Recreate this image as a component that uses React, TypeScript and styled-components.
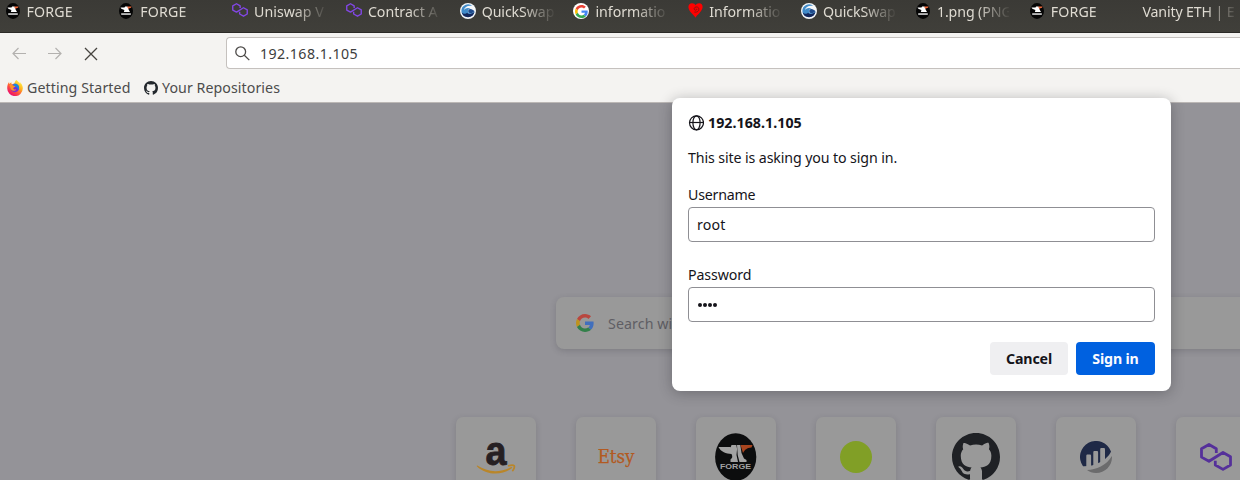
import React from 'react';
import styled, { createGlobalStyle } from 'styled-components';

const GlobalStyle = createGlobalStyle`
  * { box-sizing: border-box; }
  body { margin: 0; font-family: "Noto Sans", "Open Sans", sans-serif; overflow: hidden; }
  svg { display: block; flex: none; }
`;

const Browser = styled.div`
  position: relative;
  display: flex;
  flex-direction: column;
  width: 1240px;
  height: 480px;
  overflow: hidden;
  background: #f4f3f1;
`;

const TabBar = styled.div`
  display: flex;
  height: 33px;
  flex: none;
  padding-left: 4.5px;
  background: linear-gradient(#3b3a36, #403f3a);
  border-bottom: 1px solid #2b2a27;
  overflow: hidden;
`;

const Tab = styled.div`
  display: flex;
  gap: 6px;
  flex: none;
  width: 113.8px;
  height: 24px;
  align-items: center;
`;

const TabIcon = styled.span`
  display: flex;
  flex: none;
  width: 16px;
  height: 16px;
  margin-top: -2px;
  justify-content: center;
`;

const TabTitle = styled.span<{ $wide?: boolean; $ls?: number }>`
  width: ${(p) => (p.$wide ? 95 : 72)}px;
  overflow: hidden;
  white-space: nowrap;
  font-size: 14.2px;
  line-height: 22px;
  letter-spacing: ${(p) => p.$ls ?? 0}px;
  color: #dfdbd2;
  mask-image: linear-gradient(to right, #000 calc(100% - 32px), rgba(0, 0, 0, 0.06));
`;

const NavBar = styled.div`
  display: flex;
  flex: none;
  height: 40px;
  padding: 4px 0 4px 10px;
  align-items: center;
`;

const NavButtons = styled.div`
  display: flex;
  gap: 18px;
  width: 216px;
  padding-top: 2px;
`;

const UrlBar = styled.div`
  display: flex;
  flex: 1;
  height: 32px;
  align-items: center;
  gap: 10px;
  padding-left: 8px;
  background: #fff;
  border: 1px solid #c5c1be;
  border-right: 0;
  border-radius: 4px 0 0 4px;
`;

const Text = styled.span<{ $size?: number; $ls?: number; $color?: string; $bold?: boolean; $drop?: boolean }>`
  white-space: nowrap;
  padding-top: ${(p) => (p.$drop ? 2 : 0)}px;
  font-size: ${(p) => p.$size ?? 14.2}px;
  line-height: 20px;
  letter-spacing: ${(p) => p.$ls ?? 0}px;
  color: ${(p) => p.$color ?? '#15141a'};
  font-weight: ${(p) => (p.$bold ? 700 : 400)};
`;

const Bookmarks = styled.div`
  display: flex;
  flex: none;
  height: 30px;
  padding-left: 7px;
  gap: 13px;
  align-items: center;
  border-bottom: 1px solid #bbb7b5;
`;

const Bookmark = styled.div<{ $width?: number }>`
  display: flex;
  align-items: center;
  gap: 4px;
  width: ${(p) => (p.$width ? `${p.$width}px` : 'auto')};
`;

const NewTab = styled.main`
  flex: 1;
  display: flex;
  flex-direction: column;
  padding: 194px 0 0 456px;
  background: #949398;
  overflow: hidden;
`;

const SearchBox = styled.div`
  display: flex;
  flex: none;
  align-items: center;
  gap: 14px;
  width: 720px;
  height: 52px;
  margin-left: 100px;
  padding-left: 20px;
  background: #999;
  border-radius: 8px;
  box-shadow: 0 2px 6px rgba(40, 40, 50, 0.2);
`;

const Tiles = styled.div`
  display: flex;
  gap: 40px;
  margin-top: 68px;
`;

const Tile = styled.div`
  display: flex;
  flex: none;
  width: 80px;
  height: 80px;
  align-items: center;
  justify-content: center;
  background: #999;
  border-radius: 7px;
  box-shadow: 0 2px 6px rgba(40, 40, 50, 0.18);
`;

const Dialog = styled.form`
  position: absolute;
  left: 672px;
  top: 98px;
  width: 499px;
  height: 293px;
  padding: 15px 16px 16px;
  display: flex;
  flex-direction: column;
  background: #fff;
  border-radius: 8px;
  box-shadow: 0 2px 14px rgba(30, 30, 35, 0.33);
`;

const DialogTitle = styled.div`
  display: flex;
  align-items: center;
  gap: 4px;
  height: 20px;
  margin-bottom: 15px;
`;

const Field = styled.label<{ $top: number }>`
  display: flex;
  flex-direction: column;
  margin-top: ${(p) => p.$top}px;
`;

const Entry = styled.div`
  display: flex;
  align-items: center;
  height: 35px;
  margin-top: 2px;
  padding-left: 8px;
  border: 1px solid #8f8f94;
  border-radius: 4px;
`;

const Dots = styled.div`
  display: flex;
  gap: 1.3px;
  padding-left: 0.5px;
`;

const Dot = styled.i`
  width: 4px;
  height: 4px;
  border-radius: 50%;
  background: #15141a;
`;

const Actions = styled.div`
  display: flex;
  justify-content: flex-end;
  gap: 8px;
  margin-top: 20px;
`;

const Button = styled.button<{ $primary?: boolean }>`
  display: flex;
  align-items: center;
  justify-content: center;
  width: ${(p) => (p.$primary ? 79 : 78)}px;
  height: 33px;
  padding: 0;
  border: 0;
  border-radius: 4px;
  font-family: inherit;
  background: ${(p) => (p.$primary ? '#0061e0' : '#efeff1')};
`;

const GITHUB =
  'M8 0C3.58 0 0 3.58 0 8c0 3.54 2.29 6.53 5.47 7.59.4.07.55-.17.55-.38 0-.19-.01-.82-.01-1.49-2.01.37-2.53-.49-2.69-.94-.09-.23-.48-.94-.82-1.13-.28-.15-.68-.52-.01-.53.63-.01 1.08.58 1.23.82.72 1.21 1.87.87 2.33.66.07-.52.28-.87.51-1.07-1.78-.2-3.64-.89-3.64-3.95 0-.87.31-1.59.82-2.15-.08-.2-.36-1.02.08-2.12 0 0 .67-.21 2.2.82.64-.18 1.32-.27 2-.27.68 0 1.36.09 2 .27 1.53-1.04 2.2-.82 2.2-.82.44 1.1.16 1.92.08 2.12.51.56.82 1.27.82 2.15 0 3.07-1.87 3.75-3.65 3.95.29.25.54.73.54 1.48 0 1.07-.01 1.93-.01 2.2 0 .21.15.46.55.38A8.013 8.013 0 0016 8c0-4.42-3.58-8-8-8z';

const GitHub = ({ size, color }: { size: number; color: string }) => (
  <svg width={size} height={size} viewBox="0 0 16 16"><path fill={color} d={GITHUB} /></svg>
);

const Google = ({ size, colors }: { size: number; colors: string[] }) => (
  <svg width={size} height={size} viewBox="0 0 48 48">
    <path fill={colors[0]} d="M24 9.5c3.54 0 6.71 1.22 9.21 3.6l6.85-6.85C35.9 2.38 30.47 0 24 0 14.62 0 6.51 5.38 2.56 13.22l7.98 6.19C12.43 13.72 17.74 9.5 24 9.5z" />
    <path fill={colors[1]} d="M46.98 24.55c0-1.57-.15-3.09-.38-4.55H24v9.02h12.94c-.58 2.96-2.26 5.48-4.78 7.18l7.73 6c4.51-4.18 7.09-10.36 7.09-17.65z" />
    <path fill={colors[2]} d="M10.53 28.59c-.48-1.45-.76-2.99-.76-4.59s.27-3.14.76-4.59l-7.98-6.19C.92 16.46 0 20.12 0 24c0 3.88.92 7.54 2.56 10.78l7.97-6.19z" />
    <path fill={colors[3]} d="M24 48c6.48 0 11.93-2.13 15.89-5.81l-7.73-6c-2.15 1.45-4.92 2.3-8.16 2.3-6.26 0-11.57-4.22-13.47-9.91l-7.98 6.19C6.51 42.62 14.62 48 24 48z" />
  </svg>
);

const GoogleBadge = styled.span`
  display: flex;
  width: 16px;
  height: 16px;
  align-items: center;
  justify-content: center;
  border-radius: 50%;
  background: #fff;
`;

const Polygon = ({ width, color }: { width: number; color: string }) => (
  <svg width={width} height={(width * 28) / 32} viewBox="0 0 32 28">
    <path fill="none" stroke={color} strokeWidth="2.8" strokeLinejoin="round" d="M16.3 10V5.8L9 1.500 1.500 5.800v8.300L9 18.300 23 9.500l7.500 4.200v8.300L23 26.400 15.300 22v-4.300" />
  </svg>
);

const Forge = ({ width, height, white, accent, black }: { width: number; height: number; white: string; accent: string; black: string }) => (
  <svg width={width} height={height} viewBox="0 0 42 48" preserveAspectRatio="none">
    <ellipse cx="20.700" cy="24" rx="20.6" ry="23.7" fill={black} />
    <path fill={white} d="M3.500 14h12v.8l1-2.800h4.800l.8 4-.6 6 1.500 7h-7.500v-2.500c2-1.500 2.300-3 1-5.500C11 20.500 6 19 3.500 14z" />
    <path fill={white} d="M22 12h3.300l1.200 8 2.500 5.500 2.500 1.500v2h-7l-1.800-7z" />
    <path fill={accent} d="M25.500 12H37.500l-1 2.500c-5 .5-6.500 2-8.500 5.500z" />
    <text x="20.500" y="36.400" textAnchor="middle" textLength="31" lengthAdjust="spacingAndGlyphs" fontFamily="Liberation Sans" fontWeight="700" fontSize="8" fill={white}>FORGE</text>
  </svg>
);

const ForgeSmall = () => (
  <svg width="14" height="16" viewBox="0 0 14 16">
    <ellipse cx="7" cy="8" rx="7" ry="7.900" fill="#050505" />
    <path fill="#fff" d="M1.500 4.500h4l.6-.9h2.400l1.200 3.200 1.300 2.200H4.900l.5-2C3.600 6.600 2 5.800 1.500 4.500z" />
    <path fill="#f06a3c" d="M8.300 3.600h4.200l-.4 1.100c-1.500.1-2.100.5-2.800 1.500z" />
    <path fill="#b5b5b5" d="M2.200 10.100h9.600v1.900H2.200z" />
  </svg>
);

const QuickSwap = () => (
  <svg width="16" height="16" viewBox="0 0 16 16">
    <circle cx="8" cy="8" r="8" fill="#f4f7fa" />
    <path fill="#418bc9" d="M1.400 8.500A6.700 6.700 0 0112.500 3C8 2 4.500 4 4 7c1.500-2 4.500-2.700 6.500-1-2 0-3 1.300-2.500 2.800 1 2.200 4 1.500 6.600-.8A6.700 6.700 0 011.400 8.500z" />
    <path fill="#14275c" d="M1.500 9.300C3.500 11.500 6 11 7 9.800c2 2.200 5.500 1.200 7.500-1A6.700 6.700 0 011.500 9.300z" />
    <path fill="#1f4b8c" d="M10.500 6c1.300.2 2.700 1 3.900 2-.7 2-4.500 3.300-6 1-.8-1.500.3-3 2.100-3z" />
  </svg>
);

const Heart = () => (
  <svg width="15" height="15" viewBox="0 0 15 15">
    <path fill="#f00" d="M7.500 14.700C6.500 12.500.7 8.700.4 4.300.3 1.700 2 .3 4 .3c1.700 0 3 .8 3.600 2C8.200 1.100 9.500.3 11.200.3c2 0 3.600 1.600 3.400 4-.4 4.300-6 8-7.100 10.400z" />
    <path fill="none" stroke="#7a1813" strokeWidth=".85" d="M6.300 9.100c2.900.5 4.800-1.100 4.600-3.200-.2-1.900-2.600-2.500-4-1.500-1.300.9-.7 2.800.7 2.800 1 0 1.400-1 .7-1.500" />
  </svg>
);

const Firefox = () => (
  <svg width="16" height="16" viewBox="0 0 16 16">
    <defs>
      <linearGradient id="fx" x1=".85" y1=".1" x2=".25" y2=".9">
        <stop offset="0" stopColor="#fff044" /><stop offset=".35" stopColor="#ffb21f" /><stop offset=".65" stopColor="#ff563b" /><stop offset="1" stopColor="#ed1269" />
      </linearGradient>
    </defs>
    <path fill="url(#fx)" d="M15 5c-.5-1.300-1.600-2.600-2.400-3 .5 1 .7 1.700.8 2.200C12.200 1.800 10.200 1.200 9.500 0 8.500.6 7.600 2 7.500 3.500c-1 .1-1.800.5-2.500 1-.7-.4-.6-1.800-.5-2.200C3.600 2.700 2.900 3.500 2.400 4.100c-.3-.5-.3-1.600-.2-2C1 3.300.2 5.600.2 8.200a7.800 7.800 0 0015.600.2C15.900 7.200 15.500 6 15 5z" />
    <circle cx="7.900" cy="8.100" r="4.100" fill="#7a2fd0" />
    <path fill="#1688e0" d="M7.500 3.500c2.500 0 4.600 1.800 4.600 4.300 0 1-.4 2-.9 2.500.1-2.800-2.700-4.200-4.700-3.800-.5-1 .2-2.300 1-3z" />
    <path fill="#ff9226" d="M2.400 5.200c1-.8 2.300-.8 3.300 0 .6.500 1.300.8 2.600.9.200.8-1.600 1.200-2 1.900-.2 1.300 1.300 2 3 1.200-1 2.200-4.500 2.100-5.600-.5-.4-1.100-.3-2-1.300-3.500z" />
  </svg>
);

const Amazon = () => (
  <svg width="40" height="40" viewBox="0 0 40 40">
    <text x="20" y="27.600" textAnchor="middle" fontFamily="Liberation Sans" fontWeight="700" fontSize="40" textLength="21" lengthAdjust="spacingAndGlyphs" fill="#262023" stroke="#262023" strokeWidth=".8">a</text>
    <path fill="#b9862a" d="M1.300 28.600c10 6.500 22 7.600 34 1.500.9-.3 1.300.6.500 1.200C26 39 10 38.300 1 29.500c-.4-.5-.1-1 .3-.9z" />
    <path fill="none" stroke="#b9862a" strokeWidth="1.700" d="M32 29c2.500-.8 5.500-.9 6.200-.2.600.8-.2 3.600-1.900 5.300" />
  </svg>
);

const Etsy = styled.span`
  font-family: "DejaVu Serif Condensed", "DejaVu Serif", serif;
  font-stretch: condensed;
  font-size: 18.5px;
  line-height: 24px;
  letter-spacing: -0.1px;
  color: #b25a22;
  -webkit-text-stroke: 0.25px #b25a22;
`;

const LimeDot = styled.div`
  width: 32px;
  height: 32px;
  border-radius: 50%;
  background: #819f26;
`;

const Etherscan = () => (
  <svg width="32" height="32" viewBox="0 0 32 32">
    <path fill="#1f2946" d="M3 25.300A16 16 0 1131 10.400c-1.500 4-6 8-10.500 10.600-5 2.800-11 4.500-17.500 4.300z" />
    <path fill="#999" d="M6.300 26V15c0-1 .5-1.400 1.400-1.400h2c.9 0 1.400.5 1.400 1.400V26zM13.300 25V11.500c0-1 .5-1.400 1.400-1.400h2c.9 0 1.400.5 1.400 1.400V25zM20.200 22V8.500c0-1 .5-1.400 1.400-1.400h2c.9 0 1.400.5 1.400 1.400V22z" />
    <path fill="#6b6b6c" d="M31.900 15C32.800 24 25.500 32 16 32c-3.500 0-6.500-1.100-9-3 9-.2 19.500-4.500 24.900-14z" />
  </svg>
);

const brand = ['#ea4335', '#4285f4', '#fbbc05', '#34a853'];
const dimBrand = ['#b9473f', '#416fbd', '#bf931c', '#33804a'];

const tabs: { title: string; icon?: React.ReactNode; ls?: number }[] = [
  { title: 'FORGE', icon: <ForgeSmall />, ls: 0.15 },
  { title: 'FORGE', icon: <ForgeSmall />, ls: 0.15 },
  { title: 'Uniswap V', icon: <Polygon width={16} color="#8247e5" /> },
  { title: 'Contract A', icon: <Polygon width={16} color="#8247e5" /> },
  { title: 'QuickSwap', icon: <QuickSwap />, ls: -0.1 },
  { title: 'informatio', icon: <GoogleBadge><Google size={13} colors={brand} /></GoogleBadge>, ls: -0.05 },
  { title: 'Informatio', icon: <Heart />, ls: -0.05 },
  { title: 'QuickSwap', icon: <QuickSwap />, ls: -0.1 },
  { title: '1.png (PNG', icon: <ForgeSmall />, ls: -0.1 },
  { title: 'FORGE', icon: <ForgeSmall />, ls: 0.15 },
  { title: 'Vanity ETH | E', ls: -0.15 },
];

export default function App() {
  return (
    <Browser>
      <GlobalStyle />
      <TabBar>
        {tabs.map((t, i) => (
          <Tab key={i}>
            {t.icon && <TabIcon>{t.icon}</TabIcon>}
            <TabTitle $wide={!t.icon} $ls={t.ls}>{t.title}</TabTitle>
          </Tab>
        ))}
      </TabBar>
      <NavBar>
        <NavButtons>
          <svg width="18" height="18" viewBox="0 0 18 18" fill="none" stroke="#b3b1af" strokeWidth="1.200"><path d="M16 8.500H3M8.500 3L3 8.500 8.500 14" /></svg>
          <svg width="18" height="18" viewBox="0 0 18 18" fill="none" stroke="#b3b1af" strokeWidth="1.200"><path d="M2 8.500h13M9.500 3L15 8.500 9.500 14" /></svg>
          <svg width="18" height="18" viewBox="0 0 18 18" fill="none" stroke="#45433f" strokeWidth="1.300"><path d="M3 3l12 12M15 3L3 15" /></svg>
        </NavButtons>
        <UrlBar>
          <svg width="15" height="15" viewBox="0 0 15 15" fill="none" stroke="#4c4a48" strokeWidth="1.300"><circle cx="5.700" cy="5.700" r="4.900" /><path d="M9.300 9.300l5 4.800" /></svg>
          <Text $color="#3d3d3d" $ls={0.42} $drop>192.168.1.105</Text>
        </UrlBar>
      </NavBar>
      <Bookmarks>
        <Bookmark $width={124}><Firefox /><Text $color="#4c4c4c" $ls={0.1}>Getting Started</Text></Bookmark>
        <Bookmark><GitHub size={14} color="#24292e" /><Text $color="#4c4c4c" $ls={0.07}>Your Repositories</Text></Bookmark>
      </Bookmarks>
      <NewTab>
        <SearchBox>
          <Google size={18} colors={dimBrand} />
          <Text $color="#5f5e64" $ls={0.1} $drop>Search with Google or enter address</Text>
        </SearchBox>
        <Tiles>
          <Tile><Amazon /></Tile>
          <Tile><Etsy>Etsy</Etsy></Tile>
          <Tile><Forge width={42} height={48} white="#a3a3a3" accent="#a8451f" black="#0c0d0e" /></Tile>
          <Tile><LimeDot /></Tile>
          <Tile><GitHub size={48} color="#1f2125" /></Tile>
          <Tile><Etherscan /></Tile>
          <Tile><Polygon width={32} color="#55309a" /></Tile>
        </Tiles>
      </NewTab>
      <Dialog>
        <DialogTitle>
          <svg width="16" height="16" viewBox="0 0 16 16" fill="none" stroke="#15141a" strokeWidth="1.200"><circle cx="8.500" cy="7.800" r="7" /><ellipse cx="8.500" cy="7.800" rx="3.600" ry="7" /><path d="M1.500 7.500h14" /></svg>
          <Text $bold $ls={0.05}>192.168.1.105</Text>
        </DialogTitle>
        <Text $ls={-0.11}>This site is asking you to sign in.</Text>
        <Field $top={17}>
          <Text $ls={-0.2}>Username</Text>
          <Entry><Text $ls={0.2}>root</Text></Entry>
        </Field>
        <Field $top={23}>
          <Text $ls={-0.1}>Password</Text>
          <Entry><Dots><Dot /><Dot /><Dot /><Dot /></Dots></Entry>
        </Field>
        <Actions>
          <Button type="button"><Text $bold $ls={-0.15}>Cancel</Text></Button>
          <Button type="button" $primary><Text $bold $ls={-0.15} $color="#fbfbfe">Sign in</Text></Button>
        </Actions>
      </Dialog>
    </Browser>
  );
}
